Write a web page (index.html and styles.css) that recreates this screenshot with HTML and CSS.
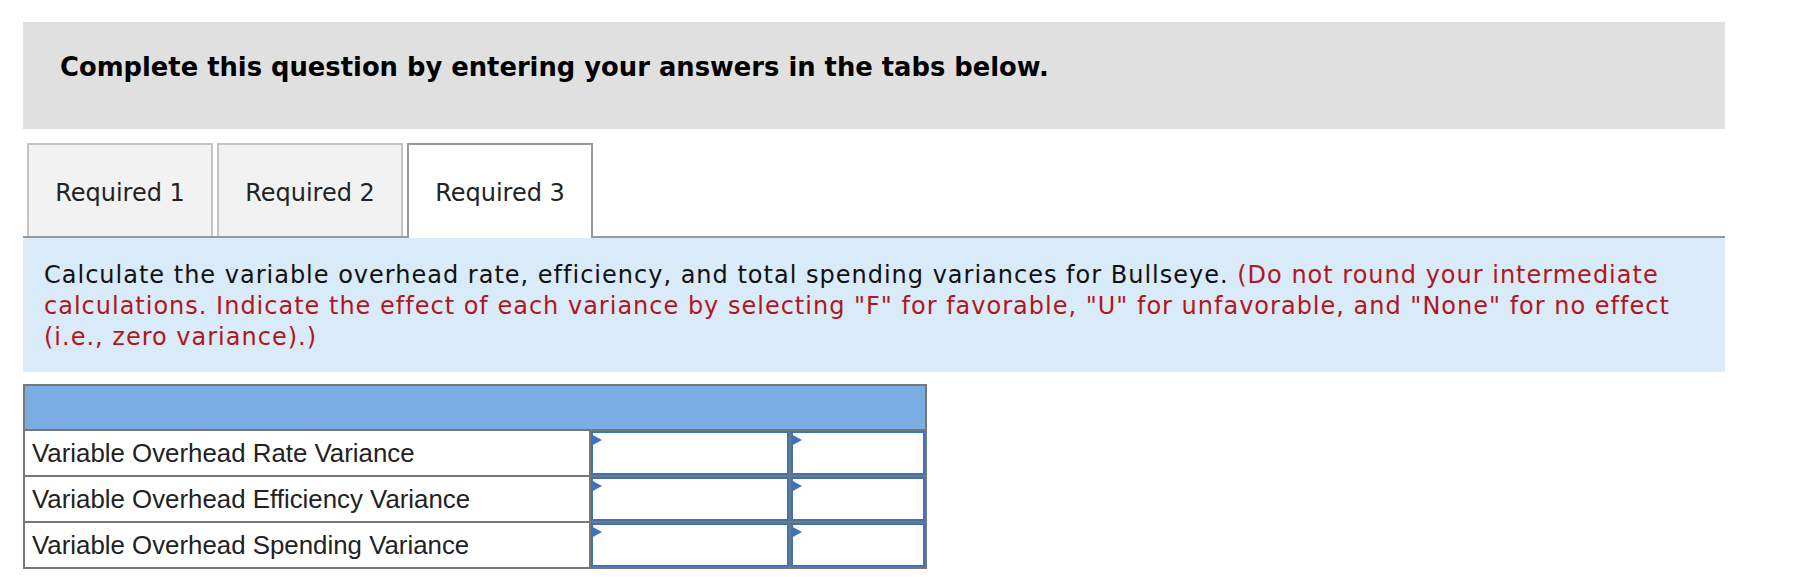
FILE: index.html
```html
<!DOCTYPE html>
<html lang="en">
<head>
  <meta charset="UTF-8">
  <title>Required 3</title>
  <link rel="stylesheet" href="styles.css">
</head>
<body>

<div id="question">
  <div id="question-header">Complete this question by entering your answers in the tabs below.</div>

  <div id="tab-bar">
    <div class="tab">Required 1</div>
    <div class="tab">Required 2</div>
    <div class="tab active">Required 3</div>
  </div>

  <div id="instructions">
    Calculate the variable overhead rate, efficiency, and total spending variances for Bullseye.
    <span class="note">(Do not round your intermediate calculations. Indicate the effect of each variance by selecting "F" for favorable, "U" for unfavorable, and "None" for no effect (i.e., zero variance).)</span>
  </div>

  <table id="answer-table">
    <colgroup>
      <col class="col-label">
      <col class="col-amount">
      <col class="col-effect">
    </colgroup>
    <tr class="table-head">
      <td colspan="3"></td>
    </tr>
    <tr>
      <td class="row-label">Variable Overhead Rate Variance</td>
      <td class="answer-cell"><div class="answer"></div></td>
      <td class="answer-cell"><div class="answer"></div></td>
    </tr>
    <tr>
      <td class="row-label">Variable Overhead Efficiency Variance</td>
      <td class="answer-cell"><div class="answer"></div></td>
      <td class="answer-cell"><div class="answer"></div></td>
    </tr>
    <tr>
      <td class="row-label">Variable Overhead Spending Variance</td>
      <td class="answer-cell"><div class="answer"></div></td>
      <td class="answer-cell"><div class="answer"></div></td>
    </tr>
  </table>
</div>

</body>
</html>
```

FILE: styles.css
```css
body {
    margin: 0;
    padding: 0;
    background: #fff;
    font-family: 'DejaVu Sans', Verdana, sans-serif;
}

#question {
    width: 1702px;
    margin: 22px 0 0 23px;
}

#question-header {
    height: 107px;
    box-sizing: border-box;
    padding: 30px 37px 0;
    background: #e0e0e0;
    color: #000;
    font-weight: bold;
    font-size: 25.8px;
}

#tab-bar {
    display: flex;
    align-items: flex-end;
    gap: 4px;
    margin-top: 14px;
    padding-left: 4px;
    border-bottom: 2px solid #999;
}

.tab {
    width: 186px;
    height: 93px;
    box-sizing: border-box;
    padding-top: 34px;
    border: 2px solid #c4c4c4;
    border-bottom: none;
    background: #f2f2f2;
    color: #222;
    font-size: 24px;
    text-align: center;
}

.tab.active {
    height: 95px;
    margin-bottom: -2px;
    border-color: #999;
    background: #fff;
}

#instructions {
    padding: 22px 40px 19px 21px;
    background: #d9eaf8;
    color: #111;
    font-size: 24px;
    letter-spacing: 1px;
    line-height: 31px;
}

.note {
    color: #b2161d;
}

#answer-table {
    width: 904px;
    margin-top: 12px;
    table-layout: fixed;
    border-collapse: collapse;
    border: 2px solid #777;
}

.col-label {
    width: 566px;
}

.col-amount {
    width: 200px;
}

.col-effect {
    width: 136px;
}

#answer-table td {
    border: 2px solid #777;
    padding: 0;
    height: 44px;
}

#answer-table .table-head td {
    height: 43px;
    background: #79ade4;
}

#answer-table .row-label {
    padding-left: 7px;
    color: #222;
    font-family: 'Liberation Sans', Arial, sans-serif;
    font-size: 25.85px;
}

.answer-cell {
    vertical-align: top;
}

.answer {
    position: relative;
    height: 44px;
    box-sizing: border-box;
    border: 2px solid #3d74b9;
    background: #fff;
}

.answer::before {
    content: "";
    position: absolute;
    top: 1px;
    left: -2px;
    border-left: 11px solid #3a74bc;
    border-top: 6px solid transparent;
    border-bottom: 6px solid transparent;
}
```
